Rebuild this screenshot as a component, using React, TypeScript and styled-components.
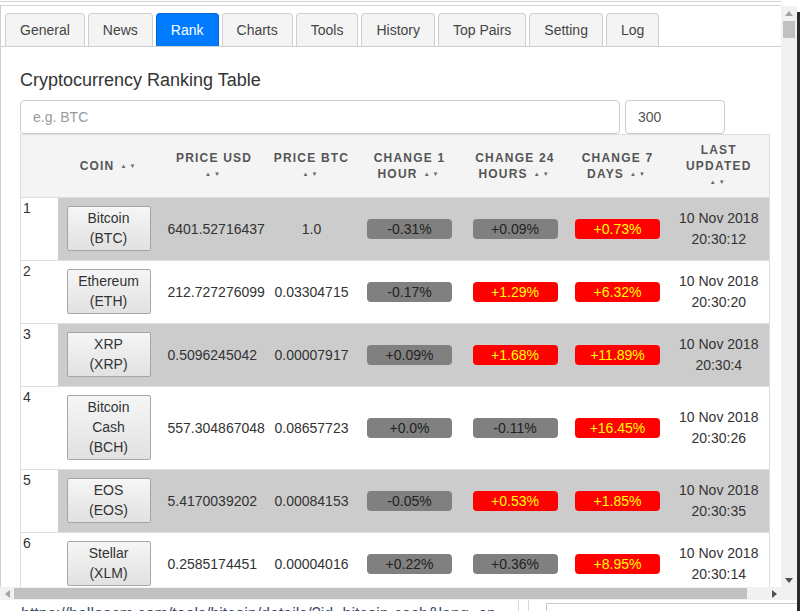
import React from 'react';
import styled, { createGlobalStyle } from 'styled-components';

const GlobalStyle = createGlobalStyle`
  html, body {
    margin: 0;
    padding: 0;
    background: #fff;
  }
  body {
    font-family: "Liberation Sans", Arial, sans-serif;
    color: #333;
  }
  * { box-sizing: border-box; }
`;

type Level = 'gray' | 'red';

interface CoinRow {
  rank: number,
  name: string[],
  usd: string,
  btc: string,
  h1: [string, Level],
  h24: [string, Level],
  d7: [string, Level],
  time: string,
}

const rows: CoinRow[] = [
  { rank: 1, name: ['Bitcoin', '(BTC)'], usd: '6401.52716437', btc: '1.0', h1: ['-0.31%', 'gray'], h24: ['+0.09%', 'gray'], d7: ['+0.73%', 'red'], time: '20:30:12' },
  { rank: 2, name: ['Ethereum', '(ETH)'], usd: '212.727276099', btc: '0.03304715', h1: ['-0.17%', 'gray'], h24: ['+1.29%', 'red'], d7: ['+6.32%', 'red'], time: '20:30:20' },
  { rank: 3, name: ['XRP', '(XRP)'], usd: '0.5096245042', btc: '0.00007917', h1: ['+0.09%', 'gray'], h24: ['+1.68%', 'red'], d7: ['+11.89%', 'red'], time: '20:30:4' },
  { rank: 4, name: ['Bitcoin', 'Cash', '(BCH)'], usd: '557.304867048', btc: '0.08657723', h1: ['+0.0%', 'gray'], h24: ['-0.11%', 'gray'], d7: ['+16.45%', 'red'], time: '20:30:26' },
  { rank: 5, name: ['EOS', '(EOS)'], usd: '5.4170039202', btc: '0.00084153', h1: ['-0.05%', 'gray'], h24: ['+0.53%', 'red'], d7: ['+1.85%', 'red'], time: '20:30:35' },
  { rank: 6, name: ['Stellar', '(XLM)'], usd: '0.2585174451', btc: '0.00004016', h1: ['+0.22%', 'gray'], h24: ['+0.36%', 'gray'], d7: ['+8.95%', 'red'], time: '20:30:14' },
];

const tabs = ['General', 'News', 'Rank', 'Charts', 'Tools', 'History', 'Top Pairs', 'Setting', 'Log'];

const headers: { lines: string[], arrowsBelow: boolean }[] = [
  { lines: ['COIN'], arrowsBelow: false },
  { lines: ['PRICE USD'], arrowsBelow: true },
  { lines: ['PRICE BTC'], arrowsBelow: true },
  { lines: ['CHANGE 1', 'HOUR'], arrowsBelow: false },
  { lines: ['CHANGE 24', 'HOURS'], arrowsBelow: false },
  { lines: ['CHANGE 7', 'DAYS'], arrowsBelow: false },
  { lines: ['LAST', 'UPDATED'], arrowsBelow: true },
];

const colWidths = [37, 103, 107, 88, 108, 103, 102, 101];

const Page = styled.div`
  display: flex;
  width: 800px;
  height: 611px;
  overflow: hidden;
  background: #fff;
`;

const Screen = styled.div`
  width: 797px;
  display: flex;
  flex-direction: column;
`;

const DarkEdge = styled.div`
  width: 3px;
  margin-top: 12px;
  background: #2b2b2b;
`;

const Popup = styled.div`
  height: 600px;
  display: flex;
  flex-direction: column;
  border-bottom: 1px solid #b9b9b9;
`;

const PopupBody = styled.div`
  display: flex;
  height: 587px;
`;

const MainCol = styled.div`
  width: 781px;
  display: flex;
  flex-direction: column;
`;

const TopEdge = styled.div`
  height: 5px;
  margin-top: 1px;
  border-top: 1px solid #d4d4d4;
  border-bottom: 1px solid #d4d4d4;
`;

const Viewport = styled.div`
  flex: 1;
  overflow: hidden;
  border-left: 1px solid #d0d0d0;
`;

const TabBar = styled.div`
  display: flex;
  gap: 3px;
  padding: 7px 0 0 4px;
  border-bottom: 1px solid #cfcfcf;
`;

const Tab = styled.div<{ $active?: boolean }>`
  height: 33px;
  padding: 0 14px;
  display: flex;
  align-items: center;
  font-size: 14px;
  color: ${(p) => (p.$active ? '#fff' : '#444')};
  background: ${(p) => (p.$active ? '#007bff' : '#f4f4f4')};
  border: 1px solid ${(p) => (p.$active ? '#0069d9' : '#cfcfcf')};
  border-bottom: none;
  border-radius: 4px 4px 0 0;
`;

const Content = styled.div`
  padding: 22px 12px 0 19px;
`;

const Title = styled.h1`
  margin: 0 0 9px;
  font-size: 18px;
  line-height: 22px;
  font-weight: 400;
  color: #333;
`;

const SearchRow = styled.div`
  display: flex;
  gap: 5px;
`;

const Input = styled.input<{ $w: number }>`
  width: ${(p) => p.$w}px;
  height: 34px;
  padding: 6px 12px;
  border: 1px solid #ccc;
  border-radius: 4px;
  font-family: "Liberation Sans", Arial, sans-serif;
  font-size: 14px;
  color: #555;
  outline: none;
  &::placeholder { color: #999; }
`;

const Table = styled.table`
  width: 749px;
  border-collapse: collapse;
  table-layout: fixed;
  border: 1px solid #ddd;
`;

const Col = styled.col<{ $w: number }>`
  width: ${(p) => p.$w}px;
`;

const Th = styled.th`
  height: 63px;
  padding: 0;
  background: #f4f4f4;
  font-size: 12px;
  line-height: 16px;
  font-weight: 700;
  letter-spacing: 1.2px;
  color: #555;
  text-align: center;
  vertical-align: middle;
`;

const HeadLine = styled.span`
  white-space: nowrap;
`;

const Arrows = styled.span<{ $below?: boolean }>`
  display: ${(p) => (p.$below ? 'block' : 'inline')};
  margin-left: ${(p) => (p.$below ? '0' : '6px')};
  font-size: 6px;
  letter-spacing: 3px;
  color: #666;
  vertical-align: 2px;
`;

const Tr = styled.tr<{ $shaded: boolean }>`
  background: ${(p) => (p.$shaded ? '#cccccc' : '#fff')};
`;

const Td = styled.td<{ $align?: 'left' | 'center' }>`
  padding: 8px 7px 9px;
  border-top: 1px solid #ddd;
  font-size: 14px;
  color: #333;
  text-align: ${(p) => p.$align || 'center'};
  vertical-align: middle;
  white-space: nowrap;
`;

const RankTd = styled.td`
  padding: 2px 2px;
  border-top: 1px solid #ddd;
  background: #fff;
  font-size: 14px;
  color: #333;
  vertical-align: top;
`;

const CoinTd = styled.td`
  padding: 8px 0 9px 9px;
  border-top: 1px solid #ddd;
  vertical-align: middle;
`;

const CoinButton = styled.button`
  display: block;
  width: 84px;
  padding: 1px 4px 2px;
  border: 1px solid #a6a6a6;
  border-radius: 2px;
  background: linear-gradient(#f6f6f6, #e1e1e1);
  font-family: "Liberation Sans", Arial, sans-serif;
  font-size: 14px;
  line-height: 20px;
  color: #333;
  text-align: center;
`;

const Badge = styled.span<{ $level: Level }>`
  display: inline-block;
  width: 85px;
  height: 20px;
  line-height: 20px;
  border-radius: 4px;
  font-size: 14px;
  text-align: center;
  background: ${(p) => (p.$level === 'red' ? '#ff0000' : '#808080')};
  color: ${(p) => (p.$level === 'red' ? '#ffff00' : '#222')};
`;

const Stamp = styled.div`
  line-height: 21px;
`;

const VScroll = styled.div`
  width: 16px;
  margin-top: 6px;
  background: #f1f1f1;
  display: flex;
  flex-direction: column;
`;

const ScrollBtn = styled.div`
  height: 14px;
  display: flex;
  align-items: center;
  justify-content: center;
`;

const VThumb = styled.div`
  height: 17px;
  margin: 1px 2px 0;
  background: #c1c1c1;
`;

const Spacer = styled.div`
  flex: 1;
`;

const HScrollRow = styled.div`
  display: flex;
  height: 13px;
`;

const HTrack = styled.div`
  width: 781px;
  display: flex;
  align-items: center;
  background: #f1f1f1;
`;

const HBtn = styled.div`
  width: 14px;
  height: 13px;
  display: flex;
  align-items: center;
  justify-content: center;
`;

const HThumb = styled.div`
  width: 733px;
  height: 11px;
  background: #c1c1c1;
`;

const Corner = styled.div`
  width: 16px;
  background: #f1f1f1;
`;

const Below = styled.div`
  height: 11px;
  display: flex;
  overflow: hidden;
`;

const BelowText = styled.div`
  width: 519px;
  padding: 5px 0 0 21px;
  font-size: 16px;
  line-height: 18px;
  color: #3b4a6b;
  white-space: nowrap;
  overflow: hidden;
  border-right: 1px solid #d8d8d8;
`;

const BelowGap = styled.div`
  width: 10px;
  border-right: 1px solid #d8d8d8;
`;

const BelowBox = styled.div`
  flex: 1;
  margin: 3px 0 0 17px;
  border-top: 1px solid #ccc;
  border-left: 1px solid #ccc;
`;

const Tri = ({ dir, color }: { dir: 'up' | 'down' | 'left' | 'right', color: string }) => {
  const pts = {
    up: '0,5 4,0 8,5',
    down: '0,0 8,0 4,5',
    left: '5,0 5,8 0,4',
    right: '0,0 0,8 5,4',
  }[dir];
  const horiz = dir === 'left' || dir === 'right';
  return (
    <svg width={horiz ? 5 : 8} height={horiz ? 8 : 5} viewBox={horiz ? '0 0 5 8' : '0 0 8 5'}>
      <polygon points={pts} fill={color} />
    </svg>
  );
};

const App = () => (
  <>
    <GlobalStyle />
    <Page>
      <Screen>
        <Popup>
          <PopupBody>
            <MainCol>
              <TopEdge />
              <Viewport>
                <TabBar>
                  {tabs.map((t) => (
                    <Tab key={t} $active={t === 'Rank'}>{t}</Tab>
                  ))}
                </TabBar>
                <Content>
                  <Title>Cryptocurrency Ranking Table</Title>
                  <SearchRow>
                    <Input $w={600} placeholder="e.g. BTC" />
                    <Input $w={100} defaultValue="300" />
                  </SearchRow>
                  <Table>
                    <colgroup>
                      {colWidths.map((w, i) => <Col key={i} $w={w} />)}
                    </colgroup>
                    <thead>
                      <tr>
                        <Th />
                        {headers.map((h) => (
                          <Th key={h.lines.join(' ')}>
                            {h.lines.map((l, i) => (
                              <React.Fragment key={l}>
                                {i > 0 && <br />}
                                <HeadLine>{l}</HeadLine>
                              </React.Fragment>
                            ))}
                            <Arrows $below={h.arrowsBelow}>▲▼</Arrows>
                          </Th>
                        ))}
                      </tr>
                    </thead>
                    <tbody>
                      {rows.map((r) => (
                        <Tr key={r.rank} $shaded={r.rank % 2 === 1}>
                          <RankTd>{r.rank}</RankTd>
                          <CoinTd>
                            <CoinButton>
                              {r.name.map((n, i) => (
                                <React.Fragment key={n}>
                                  {i > 0 && <br />}
                                  {n}
                                </React.Fragment>
                              ))}
                            </CoinButton>
                          </CoinTd>
                          <Td $align="left">{r.usd}</Td>
                          <Td>{r.btc}</Td>
                          <Td><Badge $level={r.h1[1]}>{r.h1[0]}</Badge></Td>
                          <Td><Badge $level={r.h24[1]}>{r.h24[0]}</Badge></Td>
                          <Td><Badge $level={r.d7[1]}>{r.d7[0]}</Badge></Td>
                          <Td>
                            <Stamp>10 Nov 2018</Stamp>
                            <Stamp>{r.time}</Stamp>
                          </Td>
                        </Tr>
                      ))}
                    </tbody>
                  </Table>
                </Content>
              </Viewport>
            </MainCol>
            <VScroll>
              <ScrollBtn><Tri dir="up" color="#a3a3a3" /></ScrollBtn>
              <VThumb />
              <Spacer />
              <ScrollBtn><Tri dir="down" color="#505050" /></ScrollBtn>
            </VScroll>
          </PopupBody>
          <HScrollRow>
            <HTrack>
              <HBtn><Tri dir="left" color="#a3a3a3" /></HBtn>
              <HThumb />
              <Spacer />
              <HBtn><Tri dir="right" color="#505050" /></HBtn>
            </HTrack>
            <Corner />
          </HScrollRow>
        </Popup>
        <Below>
          <BelowText>https://helloacm.com/tools/bitcoin/details/?id=bitcoin-cash&amp;lang=en</BelowText>
          <BelowGap />
          <BelowBox />
        </Below>
      </Screen>
      <DarkEdge />
    </Page>
  </>
);

export default App;
